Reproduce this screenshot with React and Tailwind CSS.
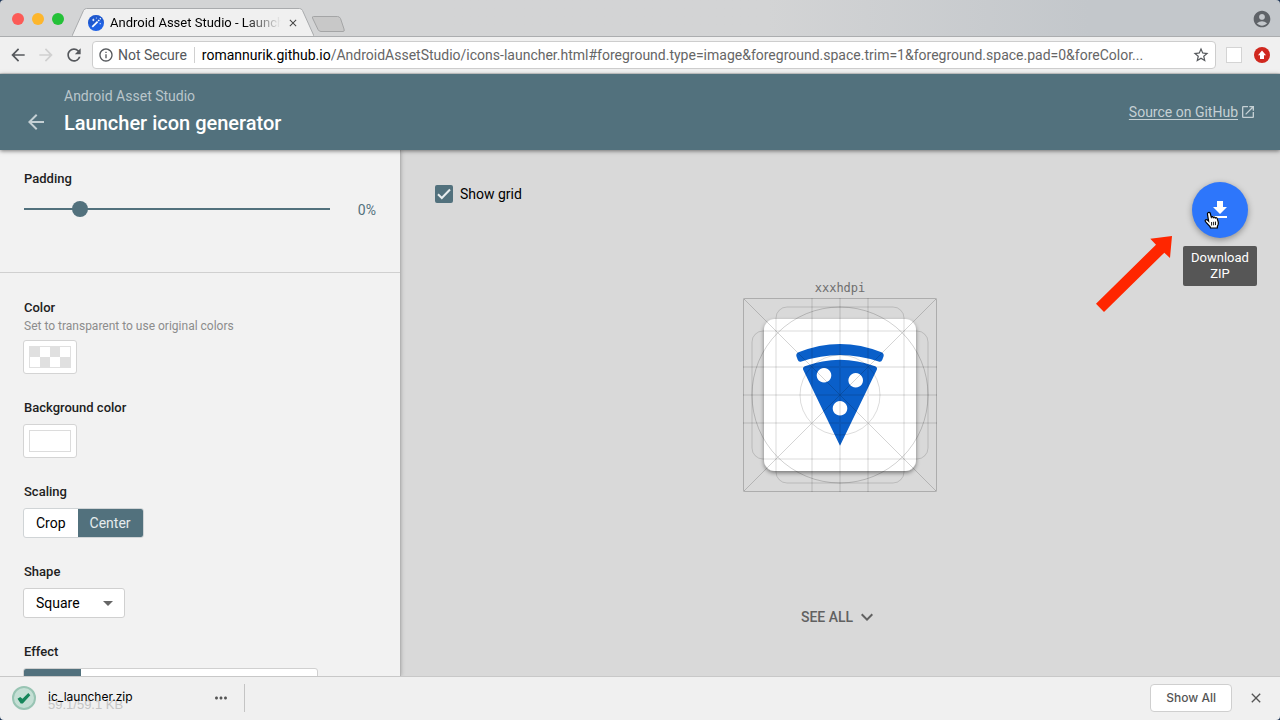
import { useState } from "react";
import {
  MdAccountCircle,
  MdArrowBack,
  MdArrowForward,
  MdClose,
  MdExpandMore,
  MdInfoOutline,
  MdMoreHoriz,
  MdOpenInNew,
  MdRefresh,
  MdStarBorder,
} from "react-icons/md";

function Favicon() {
  return (
    <svg className="size-4 shrink-0" viewBox="0 0 16 16" aria-hidden="true">
      <circle cx="8" cy="8" r="8" fill="#2062e4" />
      <path d="M0 8a8 8 0 0 1 16 0L11 4.500 4 11z" fill="#1d4fb8" opacity=".5" />
      <path d="M3.700 11.300 9 6l1.200 1.200-5.300 5.300z" fill="#fff" />
      <path d="M9.600 5.400l1-1 1.200 1.200-1 1z" fill="#fff" />
      <path d="M5.300 3.300l.5 1.100 1.100.5-1.100.5-.5 1.100-.5-1.100-1.100-.5 1.100-.5z" fill="#fff" />
      <circle cx="12.300" cy="3.800" r=".7" fill="#fff" />
      <circle cx="12.200" cy="8.700" r=".6" fill="#fff" />
      <circle cx="8.300" cy="3" r=".5" fill="#fff" />
    </svg>
  );
}

function TabStrip() {
  return (
    <div className="flex h-9 shrink-0 items-end bg-linear-to-r from-[#d3d4d5] from-60% to-[#c3c7cb] to-85%">
      <div className="flex h-9 items-center gap-2 pt-0.5 pl-3">
        <button aria-label="Close window" className="size-3 rounded-full bg-[#fc5b57]" />
        <button aria-label="Minimize window" className="size-3 rounded-full bg-[#fdb62c]" />
        <button aria-label="Zoom window" className="size-3 rounded-full bg-[#24c138]" />
      </div>
      <div className="relative ml-2 flex h-7 w-[242px] items-center pr-[15px] pl-4">
        <svg className="absolute inset-0 h-full w-full" viewBox="0 0 242 28" preserveAspectRatio="none" aria-hidden="true">
          <path d="M0 28 11.500 2.500Q12.500.5 14.500.5H227.500Q229.500.5 230.500 2.500L242 28z" fill="#f0f0f0" />
          <path d="M0 28 11.500 2.500Q12.500.5 14.500.5H227.500Q229.500.5 230.500 2.500L242 28" fill="none" stroke="#a9abad" />
        </svg>
        <div className="relative flex min-w-0 flex-1 items-center gap-1.5 pt-0.5">
          <Favicon />
          <h1 className="min-w-0 flex-1 overflow-hidden font-[Roboto,sans-serif] text-[13px] leading-5 whitespace-nowrap text-black [mask-image:linear-gradient(90deg,#000_78%,transparent)]">
            Android Asset Studio - Launcher icon generator
          </h1>
          <button aria-label="Close tab" className="text-[#444]">
            <MdClose className="size-3" />
          </button>
        </div>
      </div>
      <button aria-label="New tab" className="-ml-1 h-7">
        <svg className="h-7 w-9" viewBox="0 0 36 28" aria-hidden="true">
          <path d="M3.500 8.500H27.500Q29.500 8.500 30.500 10.500L34 21Q35 23.500 33 23.500H11Q9 23.500 8 21.500L2.500 10Q2 8.500 3.500 8.500z" fill="#c8c8c8" stroke="#a4a5a6" />
        </svg>
      </button>
      <button aria-label="Profile" className="mr-2 ml-auto h-9 pt-0.5 text-[#5f6368]">
        <MdAccountCircle className="size-5" />
      </button>
    </div>
  );
}

function Toolbar() {
  return (
    <div className="flex h-[38px] shrink-0 items-center border-t border-b border-t-[#abadaf] border-b-[#d3d3d3] bg-[#f0f0f0] pr-2.5">
      <div className="flex w-[92px] items-center gap-2 pl-2 text-[#55585c]">
        <button aria-label="Back"><MdArrowBack className="size-5" /></button>
        <button aria-label="Forward" disabled className="text-[#d0d0d0]"><MdArrowForward className="size-5" /></button>
        <button aria-label="Reload"><MdRefresh className="size-5" /></button>
      </div>
      <div className="flex h-7 min-w-0 flex-1 items-center rounded border border-[#cdcdcd] bg-white pr-[5px] pl-[5px] font-[Roboto,sans-serif] text-sm">
        <MdInfoOutline className="size-4 text-[#55585c]" />
        <span className="pl-1 text-[#55585c]">Not Secure</span>
        <span className="mx-[7px] h-4 w-px bg-[#d0d0d0]" />
        <label htmlFor="url" className="text-black">romannurik.github.io</label>
        <input
          id="url"
          className="min-w-0 flex-1 bg-transparent text-ellipsis text-[#666] outline-none"
          defaultValue="/AndroidAssetStudio/icons-launcher.html#foreground.type=image&foreground.space.trim=1&foreground.space.pad=0&foreColor..."
        />
        <button aria-label="Bookmark this page" className="text-[#55585c]"><MdStarBorder className="size-[18px]" /></button>
      </div>
      <button aria-label="Blank extension" className="ml-2.5 h-4 w-4 border border-[#d4d4d4] bg-white" />
      <button aria-label="Upload extension" className="ml-3 flex size-4 items-center justify-center rounded-full bg-[#d0281f]">
        <svg className="size-4" viewBox="0 0 16 16" aria-hidden="true">
          <path d="M8 3.500 12 8.200H10V12H6V8.200H4z" fill="#fff" />
        </svg>
      </button>
    </div>
  );
}

function AppHeader() {
  return (
    <header className="z-10 flex h-[76px] shrink-0 items-center bg-[#52717d] pr-6 pl-6 font-[Roboto,sans-serif] shadow-[0_1px_4px_rgba(0,0,0,0.5)]">
      <a href="#studio" aria-label="Back to Android Asset Studio" className="mt-5 text-[#c5d0d4]">
        <MdArrowBack className="size-6" />
      </a>
      <div className="ml-4 pt-0.5">
        <p className="text-sm leading-5 text-[#bac6cb]">Android Asset Studio</p>
        <h2 className="text-xl leading-[34px] font-medium text-white">Launcher icon generator</h2>
      </div>
      <a href="#github" className="ml-auto flex items-center gap-0.5 text-sm text-[#c5d0d4]">
        <span className="underline underline-offset-2">Source on GitHub</span>
        <MdOpenInNew className="size-4" />
      </a>
    </header>
  );
}

function Field({ label, hint, htmlFor, children }) {
  return (
    <div className="flex flex-col items-start gap-1.5">
      <div>
        <label htmlFor={htmlFor} className="block text-[13px] leading-5 font-medium text-[#212121]">{label}</label>
        {hint && <p className="text-xs leading-4 text-[#8c8c8c]">{hint}</p>}
      </div>
      {children}
    </div>
  );
}

function Swatch({ id, checkered }) {
  return (
    <button id={id} className="-ml-px h-[34px] w-[54px] rounded-[3px] border border-[#d4d4d4] bg-white p-[5px]">
      <span
        className={
          checkered
            ? "block h-full border border-[#e0e0e0] bg-[repeating-conic-gradient(#fff_0_25%,#e0e0e0_0_50%)] bg-size-[20px_20px]"
            : "block h-full border border-[#dcdcdc] bg-white"
        }
      />
    </button>
  );
}

function Scaling() {
  const [value, setValue] = useState("Center");
  return (
    <div role="radiogroup" aria-label="Scaling" className="-ml-px flex h-[30px] overflow-hidden rounded-[3px] border border-[#d0d4d6] bg-white">
      {["Crop", "Center"].map((name) => (
        <label key={name} className="relative flex items-center px-3 text-sm text-black has-checked:bg-[#52717d] has-checked:text-[#e6ecee]">
          <input
            id={"scaling-" + name}
            type="radio"
            name="scaling"
            className="sr-only"
            checked={value === name}
            onChange={() => setValue(name)}
          />
          {name}
        </label>
      ))}
    </div>
  );
}

function Settings() {
  const [padding, setPadding] = useState(0);
  return (
    <aside className="z-[1] w-[400px] shrink-0 overflow-hidden bg-[#f2f2f2] font-[Roboto,sans-serif] shadow-[1px_0_0_#b4b4b4,1px_0_4px_rgba(0,0,0,0.25)]">
      <section className="border-b border-[#d0d0d0] px-6 pt-[19px] pb-[49px]">
        <Field label="Padding" htmlFor="padding">
          <div className="flex h-7 w-full items-center">
            <input
              id="padding"
              type="range"
              min="-10"
              max="50"
              value={padding}
              onChange={(e) => setPadding(Number(e.target.value))}
              className="h-4 min-w-0 flex-1 appearance-none bg-transparent outline-none [&::-webkit-slider-runnable-track]:h-0.5 [&::-webkit-slider-runnable-track]:bg-[#52717d] [&::-webkit-slider-thumb]:-mt-[7px] [&::-webkit-slider-thumb]:size-4 [&::-webkit-slider-thumb]:appearance-none [&::-webkit-slider-thumb]:rounded-full [&::-webkit-slider-thumb]:bg-[#52717d]"
            />
            <output htmlFor="padding" className="w-[46px] pt-0.5 text-right text-sm text-[#52717d]">{padding}%</output>
          </div>
        </Field>
      </section>
      <section className="flex flex-col gap-6 px-6 pt-[25px]">
        <Field label="Color" hint="Set to transparent to use original colors" htmlFor="color">
          <Swatch id="color" checkered />
        </Field>
        <Field label="Background color" htmlFor="background">
          <Swatch id="background" />
        </Field>
        <Field label="Scaling" htmlFor="scaling-Center">
          <Scaling />
        </Field>
        <Field label="Shape" htmlFor="shape">
          <div className="relative -ml-px">
            <select id="shape" className="h-[30px] w-[102px] appearance-none rounded-[3px] border border-[#d0d0d0] bg-white px-3 text-sm text-black">
              <option>Square</option>
            </select>
            <svg className="pointer-events-none absolute top-[13px] right-3 h-[5px] w-2.5" viewBox="0 0 10 5" aria-hidden="true">
              <path d="M0 0h10L5 5z" fill="#666" />
            </svg>
          </div>
        </Field>
        <Field label="Effect" htmlFor="effect-first">
          <div className="-ml-px flex h-[30px] w-[295px] overflow-hidden rounded-[3px] border border-[#d0d0d0] bg-white">
            <button id="effect-first" aria-pressed="true" className="w-[57px] bg-[#52717d]" />
            <button aria-label="Other effects" className="flex-1" />
          </div>
        </Field>
      </section>
    </aside>
  );
}

function LauncherIcon() {
  return (
    <svg className="mt-0.5 size-[194px]" viewBox="0 0 194 194" role="img" aria-label="Launcher icon">
      <defs>
        <filter id="lift" x="-10%" y="-10%" width="120%" height="125%">
          <feDropShadow dx="0" dy="2" stdDeviation="2" floodColor="#000" floodOpacity=".45" />
        </filter>
      </defs>
      <rect x="21" y="21" width="152" height="152" rx="11" fill="#fff" filter="url(#lift)" />
      <g fill="#0a5fc9">
        <path d="M55.500 54.300Q97 37.600 138.500 54.300 141.300 55.600 140.600 58.200L139.200 62Q138.300 64.400 135.600 63.500 97 50.300 58.400 63.500 55.700 64.400 54.800 62L53.400 58.200Q52.700 55.600 55.500 54.300z" />
        <path
          fillRule="evenodd"
          d="M61.800 68.200Q97 55.200 132.200 68.200 134.800 69.400 133.800 71.800L97 147.800 60.200 71.800Q59.200 69.400 61.800 68.200zM81 70a7.300 7.300 0 1 0 .01 0zM112.700 75a7.300 7.300 0 1 0 .01 0zM97 103a7.300 7.300 0 1 0 .01 0z"
        />
      </g>
      <g fill="none" stroke="#000" strokeOpacity=".2">
        <rect x=".5" y=".5" width="193" height="193" rx="1.500" />
        <path d="M.5.500 193.500 193.500M193.500.500.5 193.500" strokeOpacity=".17" />
        <path strokeWidth="2" strokeOpacity=".08" d="M69 0V194M97 0V194M125 0V194M0 69H194M0 97H194M0 125H194" />
        <rect x="33" y="9" width="128" height="176" rx="11" strokeOpacity=".14" />
        <rect x="9" y="33" width="176" height="128" rx="11" strokeOpacity=".14" />
        <circle cx="97" cy="97" r="88" strokeOpacity=".18" />
        <circle cx="97" cy="97" r="40" strokeOpacity=".14" />
      </g>
    </svg>
  );
}

function Pointer() {
  return (
    <svg className="pointer-events-none absolute top-[29px] left-3 h-[19px] w-4" viewBox="0 0 16 19" aria-hidden="true">
      <path
        d="M4 1.700C4.800.9 6 1.400 6.300 2.500L7.300 6.200C7.700 5.500 9 5.500 9.300 6.500 9.900 5.900 11 6.100 11.300 7 12 6.400 13 6.800 13.300 7.800L14.300 11.300C14.700 13 14 14.400 13.400 15.300L13.300 17H6.500L6 15.500 2.300 11.600C1.300 10.600.7 9.500 1.500 8.900 2.300 8.300 3.300 8.800 4.600 10.200L3.500 3.500C3.300 2.800 3.400 2.200 4 1.700z"
        fill="#fff"
        stroke="#000"
        strokeWidth="1.200"
      />
      <path d="M7.600 11v3.500M9.600 10.800v3.500M11.500 10.600v3.500" stroke="#000" strokeWidth=".9" />
    </svg>
  );
}

function Preview() {
  return (
    <main className="flex min-w-0 flex-1 flex-col bg-[#d9d9d9] pb-[41px] font-[Roboto,sans-serif]">
      <div className="flex items-start justify-between px-8 pt-8">
        <label className="relative flex h-6 items-center gap-[7px] pl-[3px] text-sm text-black">
          <input
            type="checkbox"
            defaultChecked
            className="size-[18px] appearance-none rounded-xs border-2 border-[#52717d] checked:bg-[#52717d]"
          />
          <svg className="pointer-events-none absolute top-[3px] left-[3px] size-[18px]" viewBox="0 0 18 18" aria-hidden="true">
            <path d="M3 9.300 6.800 13 15 4.500" fill="none" stroke="#e8edef" strokeWidth="2" />
          </svg>
          Show grid
        </label>
        <div className="relative">
          <button aria-label="Download ZIP" className="flex size-14 items-center justify-center rounded-full bg-[#2d76fb] shadow-[0_2px_6px_rgba(0,0,0,0.35)]">
            <svg className="size-6" viewBox="0 0 24 24" aria-hidden="true">
              <path d="M19 9h-4V3H9v6H5l7 7 7-7zM5 18v2h14v-2H5z" fill="#fff" />
            </svg>
          </button>
          <Pointer />
          <div role="tooltip" className="absolute top-16 -left-[9px] w-[74px] rounded-xs bg-[#565656] py-1 text-center text-[13px] leading-4 text-white">
            Download ZIP
          </div>
          <svg className="pointer-events-none absolute top-[54px] -left-24 h-[77px] w-[77px]" viewBox="0 0 77 77" aria-hidden="true">
            <path d="M0 67.700 60 8.700 54.300 2.700 76 0 74 22 68.300 16.700 8 76z" fill="#ff2600" />
          </svg>
        </div>
      </div>
      <figure className="mt-[42px] flex flex-col items-center">
        <figcaption className="font-['DejaVu_Sans_Mono',monospace] text-xs leading-4 text-[#6e6e6e]">xxxhdpi</figcaption>
        <LauncherIcon />
      </figure>
      <button className="mx-auto mt-auto flex h-9 items-center gap-0.5 text-sm font-medium text-[#616161]">
        SEE ALL
        <MdExpandMore className="size-6" />
      </button>
    </main>
  );
}

function DownloadShelf() {
  return (
    <footer className="z-10 flex h-11 shrink-0 items-center border-t border-[#c8c8c8] bg-[#f0f0f0] pr-4 pb-0.5 pl-3">
      <button className="flex items-center gap-3 text-left">
        <svg className="size-6" viewBox="0 0 24 24" aria-hidden="true">
          <circle cx="12" cy="12" r="11" fill="#c5dfd5" stroke="#98c4b3" strokeWidth="2" />
          <path d="M5.500 12.800 8.200 11l2.300 1.700L16.300 7l2 2.300-7.500 8.200H8.700z" fill="#16865b" />
        </svg>
        <span className="flex w-[160px] flex-col pt-1.5">
          <span className="z-[1] text-xs leading-2 text-black">ic_launcher.zip</span>
          <span className="font-['Liberation_Sans',sans-serif] text-[13px] leading-2 text-[#c4c4c4]">59.1/59.1 KB</span>
        </span>
      </button>
      <button aria-label="Download options" className="ml-1 text-[#555]"><MdMoreHoriz className="size-[18px]" /></button>
      <span className="ml-3.5 h-7 w-px bg-[#c4c4c4]" />
      <button className="ml-auto h-7 rounded border border-[#cfcfcf] bg-white px-[15px] text-xs font-medium text-[#555]">Show All</button>
      <button aria-label="Close downloads" className="ml-4 text-[#555]"><MdClose className="size-4" /></button>
    </footer>
  );
}

export default function App() {
  return (
    <div className="h-screen bg-[#1d3557]">
      <div className="flex h-full flex-col overflow-hidden rounded-sm font-[Inter,sans-serif]">
        <TabStrip />
        <Toolbar />
        <AppHeader />
        <div className="flex min-h-0 flex-1">
          <Settings />
          <Preview />
        </div>
        <DownloadShelf />
      </div>
    </div>
  );
}
